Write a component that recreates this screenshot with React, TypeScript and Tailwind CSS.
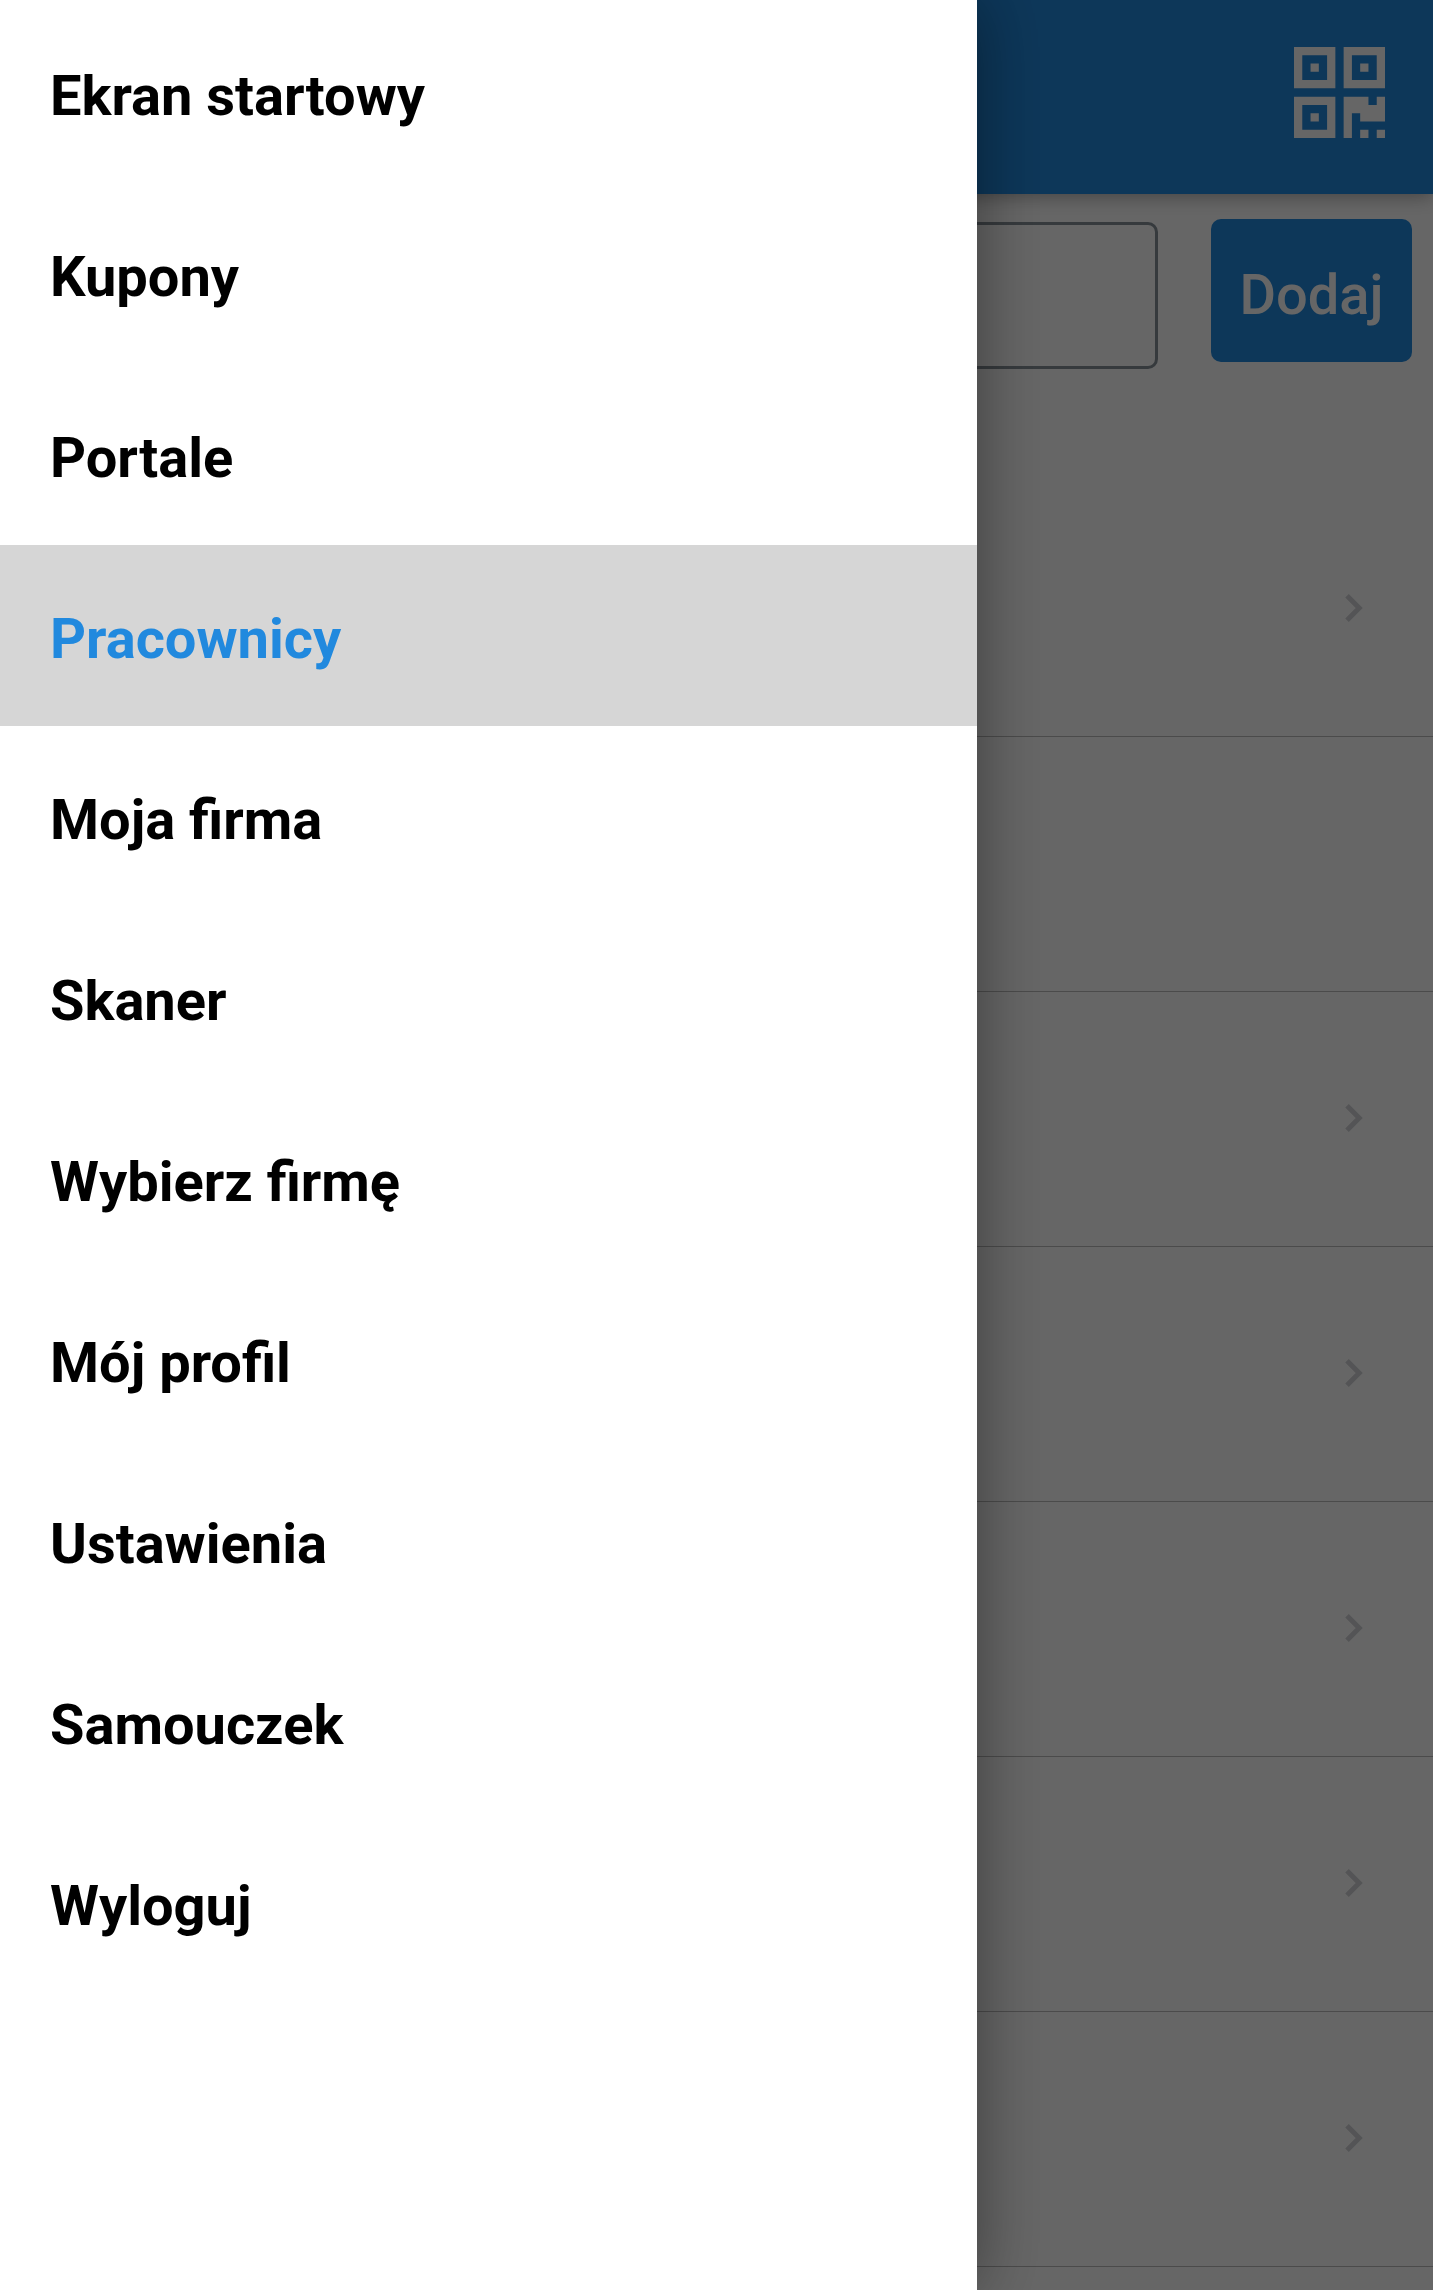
const menuItems = [
  "Ekran startowy",
  "Kupony",
  "Portale",
  "Pracownicy",
  "Moja firma",
  "Skaner",
  "Wybierz firmę",
  "Mój profil",
  "Ustawienia",
  "Samouczek",
  "Wyloguj",
];

const activeItem = "Pracownicy";

// Whether each employee row can be opened.
const employees = [true, false, true, true, true, true, true];

function QrIcon() {
  return (
    <svg viewBox="0 0 11 11" className="size-[91px]" fill="currentColor" fillRule="evenodd" aria-hidden="true">
      <path d="M0 0h5v5H0zM1 1v3h3V1zM2 2h1v1H2z" />
      <path d="M6 0h5v5H6zM7 1v3h3V1zM8 2h1v1H8z" />
      <path d="M0 6h5v5H0zM1 7v3h3V7zM2 8h1v1H2z" />
      <path d="M6 6h3v1h1V6h1v3H8V8H7v3H6zM8 10h1v1H8zM10 10h1v1h-1z" />
    </svg>
  );
}

function Chevron() {
  return (
    <svg viewBox="0 0 18 28" className="h-7 w-[18px]" fill="none" stroke="currentColor" strokeWidth="5" aria-hidden="true">
      <path d="M2 1.8 14.2 14 2 26.2" />
    </svg>
  );
}

function EmployeesPage() {
  return (
    <div className="flex min-h-screen flex-col bg-white">
      <header className="relative flex h-[194px] items-start justify-end bg-[#2189de] pt-[47px] pr-12 text-white shadow-[0_2px_18px_rgba(0,0,0,0.36)]">
        <button type="button" aria-label="Skanuj kod QR">
          <QrIcon />
        </button>
      </header>
      <main>
        <form className="flex h-72 items-start pt-[25px] pr-[21px] pl-12">
          <input
            type="text"
            aria-label="Szukaj pracownika"
            className="mt-[3px] mr-[53px] h-[147px] min-w-0 flex-1 rounded-[10px] border-3 border-[#88929a] bg-white px-8 text-[56px]"
          />
          <button
            type="button"
            className="h-[143px] w-[201px] shrink-0 rounded-[10px] bg-[#2189de] pt-2 text-[56px] font-medium text-white"
          >
            Dodaj
          </button>
        </form>
        <ul>
          {employees.map((canOpen, index) => (
            <li key={index} className="flex h-[255px] items-center justify-end border-b border-[#bbbbbb] pr-[70px] pb-0.5">
              {canOpen && (
                <button type="button" aria-label="Otwórz pracownika" className="text-[#d2d3d6]">
                  <Chevron />
                </button>
              )}
            </li>
          ))}
        </ul>
      </main>
    </div>
  );
}

function Drawer() {
  return (
    <div className="fixed inset-0 overflow-hidden bg-black/60">
      <nav
        aria-label="Menu główne"
        className="h-full w-[68.2%] bg-white pt-0.5 shadow-[0_0_64px_rgba(0,0,0,0.42)]"
      >
        <ul>
          {menuItems.map((item) => (
            <li key={item}>
              <a
                href="#"
                aria-current={item === activeItem ? "page" : undefined}
                className={
                  item === activeItem
                    ? "flex h-[181px] items-center bg-[#d6d6d6] pt-1.5 pl-[50px] text-[56px] font-bold text-[#2189de]"
                    : "flex h-[181px] items-center pt-1.5 pl-[50px] text-[56px] font-bold text-black"
                }
              >
                {item}
              </a>
            </li>
          ))}
        </ul>
      </nav>
    </div>
  );
}

export default function App() {
  return (
    <div className="font-[Roboto,sans-serif]">
      <EmployeesPage />
      <Drawer />
    </div>
  );
}
